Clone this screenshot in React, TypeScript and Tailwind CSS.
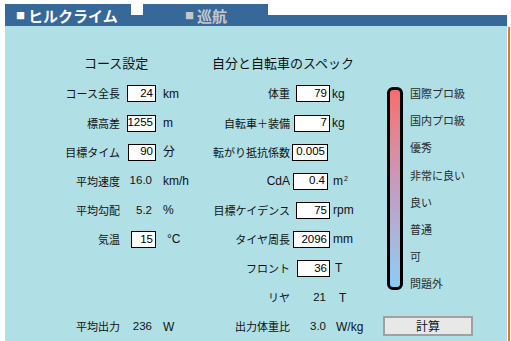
import React from 'react';

const JP = "font-['Noto_Sans_CJK_JP',sans-serif]";
const NUM = "font-['Liberation_Sans','Noto_Sans_CJK_JP',sans-serif]";

type Row = {
  label: string;
  value?: string;
  input?: boolean;
  box?: string;
  unit?: React.ReactNode;
  unitGap?: string;
};

const leftRows: (Row | null)[] = [
  { label: 'コース全長', value: '24', input: true, box: 'ml-[7px] w-[29px]', unit: 'km', unitGap: 'ml-[7px]' },
  { label: '標高差', value: '1255', input: true, box: 'ml-[7px] w-[29px]', unit: 'm', unitGap: 'ml-[7px]' },
  { label: '目標タイム', value: '90', input: true, box: 'ml-[8px] w-[28px]', unit: '分', unitGap: 'ml-[7px]' },
  { label: '平均速度', value: '16.0', box: 'ml-[7px] w-[29px]', unit: 'km/h', unitGap: 'ml-[7px]' },
  { label: '平均勾配', value: '5.2', box: 'ml-[7px] w-[29px]', unit: '%', unitGap: 'ml-[7px]' },
  { label: '気温', value: '15', input: true, box: 'ml-[11px] w-[25px]', unit: '°C', unitGap: 'ml-[11px]' },
  null,
  null,
  { label: '平均出力', value: '236', box: 'ml-[7px] w-[29px]', unit: 'W', unitGap: 'ml-[7px]' },
];

const rightRows: Row[] = [
  { label: '体重', value: '79', input: true, box: 'ml-[6px] w-[34px]', unit: 'kg', unitGap: 'ml-[2px]' },
  { label: '自転車＋装備', value: '7', input: true, box: 'ml-[4px] w-[36px]', unit: 'kg', unitGap: 'ml-[2px]' },
  { label: '転がり抵抗係数', value: '0.005', input: true, box: 'ml-[2px] w-[36px]', unit: '', unitGap: 'ml-[5px]' },
  {
    label: 'CdA',
    value: '0.4',
    input: true,
    box: 'ml-[3px] w-[35px]',
    unit: (
      <>
        m<span className="relative -top-[4px] ml-[1px] text-[7px]">2</span>
      </>
    ),
    unitGap: 'ml-[5px]',
  },
  { label: '目標ケイデンス', value: '75', input: true, box: 'ml-[6px] w-[34px]', unit: 'rpm', unitGap: 'ml-[3px]' },
  { label: 'タイヤ周長', value: '2096', input: true, box: 'ml-[3px] w-[37px]', unit: 'mm', unitGap: 'ml-[3px]' },
  { label: 'フロント', value: '36', input: true, box: 'ml-[7px] w-[33px]', unit: 'T', unitGap: 'ml-[5px]' },
  { label: 'リヤ', value: '21', box: 'ml-[5px] w-[35px]', unit: 'T', unitGap: 'ml-[9px]' },
  { label: '出力体重比', value: '3.0', box: 'ml-[5px] w-[35px]', unit: 'W/kg', unitGap: 'ml-[6px]' },
];

const levels = ['国際プロ級', '国内プロ級', '優秀', '非常に良い', '良い', '普通', '可', '問題外'];

function FormRow({ row, labelW }: { row: Row | null; labelW: string }) {
  if (!row) return <div className="h-[29.09px]" />;
  return (
    <div className="flex h-[29.09px] items-center">
      <div className={`${labelW} shrink-0 text-right text-[11px] leading-none text-[#111] ${row.label === 'CdA' ? NUM + ' text-[12px]' : JP}`}>
        {row.label}
      </div>
      {row.input ? (
        <div
          className={`${row.box} flex h-[17px] shrink-0 items-center justify-end border border-black bg-white pr-[2px] ${NUM} text-[11.5px] leading-none text-black`}
        >
          {row.value}
        </div>
      ) : (
        <div className={`${row.box} shrink-0 pr-[4px] text-right ${NUM} text-[11.5px] leading-none text-[#111]`}>
          {row.value}
        </div>
      )}
      <div className={`${row.unitGap} ${NUM} text-[12px] leading-none text-[#111] whitespace-nowrap`}>{row.unit}</div>
    </div>
  );
}

export default function App() {
  return (
    <div className="flex h-[341px] w-[511px] overflow-hidden bg-white">
      <div className="ml-[5px] flex w-[502px] flex-col">
        {/* tabs */}
        <div className="mt-[4px] flex h-[22px] items-end">
          <div className={`flex h-[22px] w-[126px] items-center bg-[#36689a] pl-[11px] ${JP} text-[15px] font-bold leading-none text-white`}>
            <span className="mr-[3px] text-[9px]">■</span>ヒルクライム
          </div>
          <div className="h-[11px] w-[12px] bg-[#36689a]" />
          <div className={`flex h-[22px] w-[125px] items-center bg-[#36689a] pl-[42px] ${JP} text-[15px] font-bold leading-none text-[#c4c8cc]`}>
            <span className="mr-[3px] text-[9px]">■</span>巡航
          </div>
          <div className="h-[11px] flex-1 bg-[#36689a]" />
        </div>

        {/* panel */}
        <div className="flex flex-1 bg-[#b0e0e6]">
          <div className="w-[195px] shrink-0 pt-[29px]">
            <div className={`ml-[79px] h-[16px] ${JP} text-[13px] leading-[16px] text-[#111]`}>コース設定</div>
            <div className="mt-[8.45px]">
              {leftRows.map((r, i) => (
                <FormRow key={i} row={r} labelW="w-[115px]" />
              ))}
            </div>
          </div>

          <div className="w-[170px] shrink-0 pt-[29px]">
            <div className={`ml-[12px] h-[16px] ${JP} text-[13px] leading-[16px] text-[#111]`}>自分と自転車のスペック</div>
            <div className="mt-[8.45px]">
              {rightRows.map((r, i) => (
                <FormRow key={i} row={r} labelW="w-[90px]" />
              ))}
            </div>
          </div>

          <div className="flex flex-col pt-[53.7px]">
            <div className="ml-[17px] flex items-start">
              <div className="mt-[7.3px] h-[203px] w-[16px] rounded-[6px] border-[3px] border-black bg-linear-to-b from-[#f96b6b] via-[#c49cc0] to-[#86cdf8]" />
              <div className="ml-[7px] flex flex-col">
                {levels.map((l) => (
                  <div key={l} className={`flex h-[27.24px] items-center ${JP} text-[11px] leading-none text-[#2a2a2a]`}>
                    {l}
                  </div>
                ))}
              </div>
            </div>
            <button
              className={`ml-[13px] mt-[18.4px] flex h-[20px] w-[90px] items-center justify-center border-2 border-[#a0a0a0] bg-[#e8e8e8] ${JP} text-[12px] leading-none text-[#111]`}
            >
              計算
            </button>
          </div>
        </div>
      </div>
      <div className="mt-[27px] ml-[1px] w-[3px] border-l-2 border-[#f07030] bg-[#fff8f0]" />
    </div>
  );
}
